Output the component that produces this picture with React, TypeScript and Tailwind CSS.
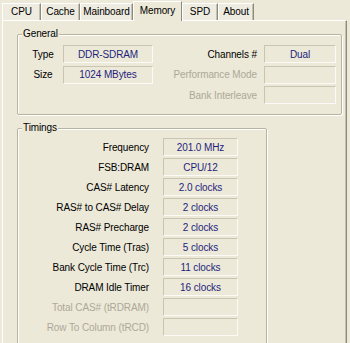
import React from "react";

const tabs = [
  { name: "CPU", w: 39 },
  { name: "Cache", w: 39 },
  { name: "Mainboard", w: 53 },
  { name: "Memory", w: 49, active: true },
  { name: "SPD", w: 36 },
  { name: "About", w: 36 },
];

function Box({ children }: { children?: React.ReactNode }) {
  return (
    <div className="h-[18px] flex items-center justify-center border-t border-l border-t-[#c9c5b1] border-l-[#c9c5b1] border-b border-r border-b-[#fbfaf6] border-r-[#fbfaf6] text-[#1e1e7e] bg-[#ECE9D8]">
      {children}
    </div>
  );
}

function Group({ title, className, children }: { title: string; className?: string; children: React.ReactNode }) {
  return (
    <div className={"relative border border-[#b8b4a2] rounded-[2px] shadow-[inset_1px_1px_0_#fff,1px_1px_0_#fff] " + (className ?? "")}>
      <span className="absolute top-[-7px] left-[4px] px-[1px] leading-[12px] bg-[#ECE9D8] text-black">{title}</span>
      {children}
    </div>
  );
}

const timings: [string, string, boolean?][] = [
  ["Frequency", "201.0 MHz"],
  ["FSB:DRAM", "CPU/12"],
  ["CAS# Latency", "2.0 clocks"],
  ["RAS# to CAS# Delay", "2 clocks"],
  ["RAS# Precharge", "2 clocks"],
  ["Cycle Time (Tras)", "5 clocks"],
  ["Bank Cycle Time (Trc)", "11 clocks"],
  ["DRAM Idle Timer", "16 clocks"],
  ["Total CAS# (tRDRAM)", "", true],
  ["Row To Column (tRCD)", "", true],
];

export default function App() {
  return (
    <div
      className="w-[350px] h-[343px] overflow-hidden bg-[#ECE9D8] text-[10px] tracking-[-0.1px] text-black"
      style={{ fontFamily: '"Liberation Sans", Arial, sans-serif' }}
    >
      <div className="relative z-10 flex items-end h-[21px] pl-[2px]">
        {tabs.map((t) =>
          t.active ? (
            <div
              key={t.name}
              style={{ width: t.w }}
              className="h-[20px] flex items-start justify-center pt-[3px] bg-[#ECE9D8] border-t border-l border-t-white border-l-white border-r border-r-[#8d8a7a] leading-[12px]"
            >
              {t.name}
            </div>
          ) : (
            <div
              key={t.name}
              style={{ width: t.w }}
              className="h-[17px] mb-[1px] flex items-center justify-center bg-[#EEECE1] border-t border-l border-t-white border-l-white border-r border-r-[#8d8a7a] shadow-[inset_-1px_0_0_#c4c1b2] leading-[12px]"
            >
              {t.name}
            </div>
          )
        )}
      </div>
      <div className="-mt-[1px] ml-[2px] w-[345px] h-[330px] border-t border-l border-t-white border-l-white border-r border-r-[#8d8a7a] shadow-[inset_-1px_0_0_#c4c1b2] pt-[13px] pl-[14px] pr-[3px]">
        <Group title="General" className="w-[325px] pt-[10px] pb-[10px]">
          <div className="flex">
            <div className="ml-[7px] flex flex-col gap-[2.5px]">
              <div className="flex items-center">
                <div className="w-[36px] text-center">Type</div>
                <div className="w-[90px] ml-[2px]"><Box>DDR-SDRAM</Box></div>
              </div>
              <div className="flex items-center">
                <div className="w-[36px] text-center">Size</div>
                <div className="w-[90px] ml-[2px]"><Box>1024 MBytes</Box></div>
              </div>
            </div>
            <div className="ml-auto mr-[5px] flex flex-col gap-[2.5px]">
              <div className="flex items-center">
                <div className="w-[100px] text-right">Channels #</div>
                <div className="w-[72px] ml-[7px]"><Box>Dual</Box></div>
              </div>
              <div className="flex items-center">
                <div className="w-[100px] text-right text-[#aca899]">Performance Mode</div>
                <div className="w-[72px] ml-[7px]"><Box /></div>
              </div>
              <div className="flex items-center">
                <div className="w-[100px] text-right text-[#aca899]">Bank Interleave</div>
                <div className="w-[72px] ml-[7px]"><Box /></div>
              </div>
            </div>
          </div>
        </Group>
        <Group title="Timings" className="w-[250px] mt-[13px] pt-[9px] pb-[10px]">
          <div className="flex flex-col gap-[2px]">
            {timings.map(([label, value, dis]) => (
              <div key={label} className="flex items-center">
                <div className={"w-[131px] text-right whitespace-nowrap " + (dis ? "text-[#aca899]" : "")}>{label}</div>
                <div className="w-[75px] ml-[14px]"><Box>{value}</Box></div>
              </div>
            ))}
          </div>
        </Group>
      </div>
    </div>
  );
}
